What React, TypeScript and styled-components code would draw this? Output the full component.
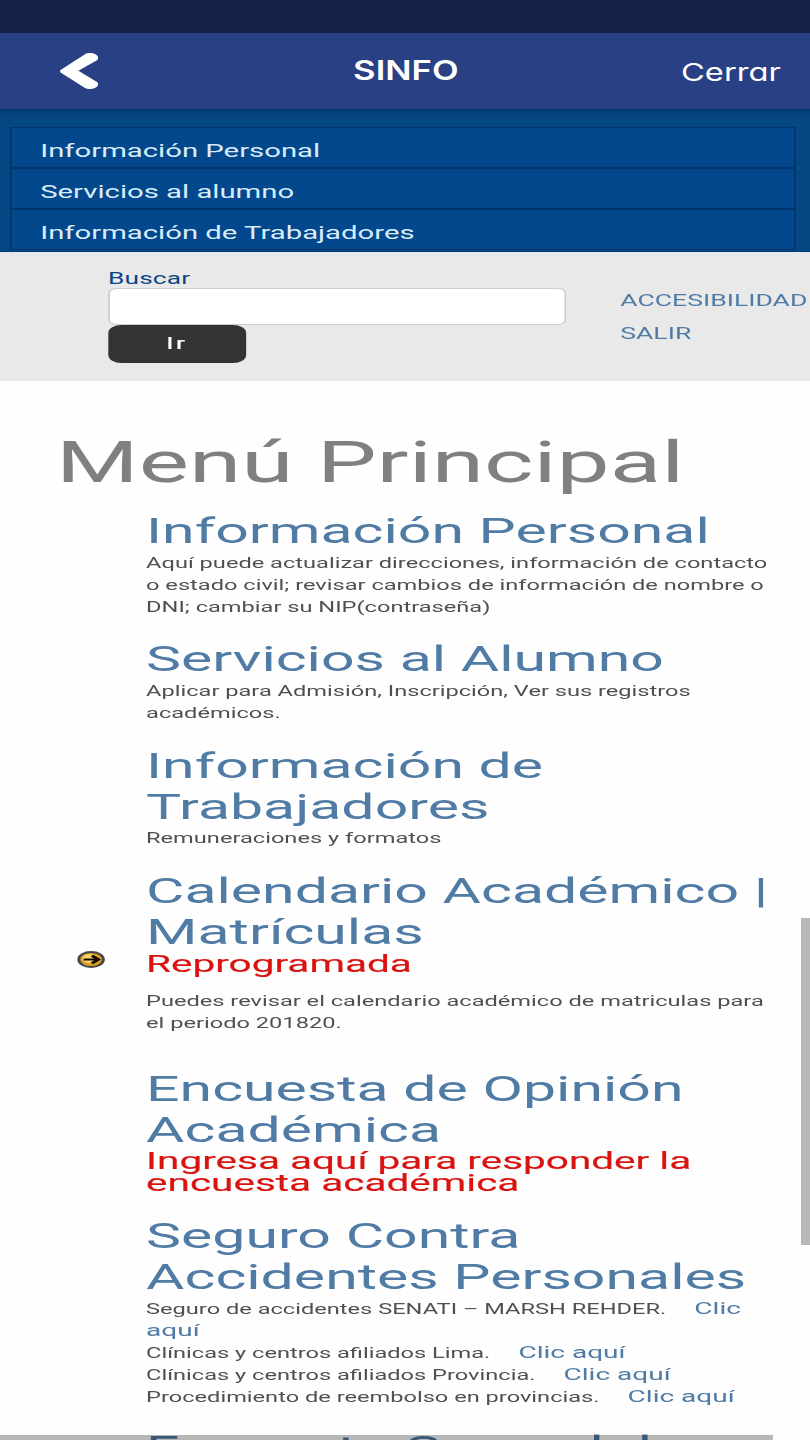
import React from "react";
import styled, { createGlobalStyle } from "styled-components";

const STRETCH = 1.641;

const GlobalStyle = createGlobalStyle`
  * { box-sizing: border-box; }
  html, body { margin: 0; padding: 0; background: #fff; overflow: hidden; }
  h1, h2, p, ul { margin: 0; padding: 0; font-weight: 400; list-style: none; }
  a { text-decoration: none; }
`;

const Screen = styled.main`
  position: relative;
  width: 810px;
  height: 1440px;
  overflow: hidden;
  background: #fefefe;
  font-family: Roboto, sans-serif;
`;

const StatusBar = styled.div`
  height: 33px;
  background: #152146;
`;

const AppBar = styled.header`
  display: grid;
  grid-template-columns: 1fr auto 1fr;
  align-items: center;
  height: 76px;
  padding: 0 29px 0 30px;
  background: #294084;
  color: #fff;
  font-family: Inter, sans-serif;
`;

const BackButton = styled.button`
  display: flex;
  width: 40px;
  margin-left: 29px;
  padding: 0;
  border: 0;
  background: none;
`;

const AppTitle = styled.div`
  padding-bottom: 2px;
  font-size: 27.5px;
  font-weight: 600;
  transform: scaleX(1.26);
`;

const CloseLink = styled.a`
  justify-self: end;
  padding-top: 1px;
  font-size: 24.5px;
  font-feature-settings: "cv11";
  transform: scaleX(1.335);
  transform-origin: right;
`;

const WebPage = styled.div`
  width: ${810 / STRETCH}px;
  transform: scaleX(${STRETCH});
  transform-origin: 0 0;
`;

const NavBand = styled.nav`
  height: 143px;
  padding: 18px 8.4px 0 5.5px;
  background: linear-gradient(#033a73 0, #05457f 6px, #054884 14px, #054884 100%);
  border-bottom: 1px solid #003c79;
`;

const NavItem = styled.a`
  display: block;
  height: 41px;
  padding: 5px 0 0 18px;
  border: 1px solid #00336a;
  background: #03488c;
  color: #d9ecfa;
  font-size: 17.85px;
  line-height: 35px;
`;

const SearchBand = styled.section`
  display: flex;
  height: 129px;
  padding: 15px 0 0 65.8px;
  border-top: 1px solid #dfe9f1;
  background: #e9e9e9;
`;

const SearchForm = styled.div`
  display: flex;
  flex-direction: column;
  align-items: flex-start;
  width: 279.6px;
`;

const SearchLabel = styled.label`
  height: 20px;
  color: #0c4585;
  font-size: 16px;
  line-height: 21px;
  letter-spacing: 0.1px;
`;

const SearchInput = styled.input`
  width: 100%;
  height: 37px;
  border: 1px solid #ccc;
  border-radius: 5px;
  background: #fff;
`;

const SearchButton = styled.button`
  width: 83.9px;
  height: 38px;
  padding: 0;
  border: 0;
  border-radius: 8px;
  background: #333;
  color: #fff;
  font: 400 16.2px/38px Roboto, sans-serif;
  letter-spacing: 1.5px;
  -webkit-text-stroke: 0.2px #fff;
`;

const UtilityLinks = styled.div`
  display: flex;
  flex-direction: column;
  padding: 16px 0 0 32.6px;
`;

const UtilityLink = styled.a`
  color: #4f7ba5;
  font-size: 16.2px;
  line-height: 33px;
`;

const PageTitle = styled.h1`
  padding: 48px 0 0 34.2px;
  color: #808080;
  font-size: 57.7px;
  line-height: 66px;
`;

const MenuList = styled.ul`
  display: flex;
  flex-direction: column;
  padding-top: 16px;
`;

const MenuItem = styled.li<{ $gap?: number }>`
  display: grid;
  grid-template-columns: 89px 383px;
  margin-bottom: ${(p) => p.$gap ?? 20}px;
`;

const Marker = styled.div`
  padding: 80px 0 0 46.6px;
  line-height: 0;
`;

const ItemBody = styled.div`
  grid-column: 2;
`;

const ItemTitle = styled.h2`
  color: #4f7ba5;
  font-size: 35.95px;
  line-height: 41px;
`;

const Alert = styled.p<{ $spaced?: boolean }>`
  margin: ${(p) => (p.$spaced ? "0 0 16px" : "-1px 0 0")};
  color: #d91410;
  font-size: 24.7px;
  line-height: 22px;
  -webkit-text-stroke: 0.15px #d91410;
`;

const Description = styled.p<{ $flush?: boolean }>`
  padding-top: ${(p) => (p.$flush ? 0 : 1)}px;
  color: #505050;
  font-size: 14.4px;
  line-height: 22px;
`;

const InlineLink = styled.a`
  margin-left: 13.5px;
  color: #4f7ba5;
  font-size: 17.1px;
  line-height: 0;
`;

const VerticalThumb = styled.div`
  position: absolute;
  top: 918px;
  right: 0;
  width: 9px;
  height: 327px;
  background: #b8b8b8;
`;

const HorizontalThumb = styled.div`
  position: absolute;
  left: 0;
  bottom: 0;
  width: 773px;
  height: 5px;
  background: rgba(0, 0, 0, 0.28);
`;

const navigation = ["Información Personal", "Servicios al alumno", "Información de Trabajadores"];

const insuranceLinks = [
  "Seguro de accidentes SENATI – MARSH REHDER.",
  "Clínicas y centros afiliados Lima.",
  "Clínicas y centros afiliados Provincia.",
  "Procedimiento de reembolso en provincias.",
];

const BackIcon = () => (
  <svg width="40" height="40" viewBox="0 0 40 40" aria-hidden="true">
    <path
      d="M1.6 19 26 3.2C31 .2 42 3.6 38.4 9L19.4 19.8 38.4 31.2C42 36.8 31 39.8 26 37L1.6 21.4Q.6 20.2 1.6 19Z"
      fill="#fff"
    />
  </svg>
);

const ArrowBadge = () => (
  <svg width="17" height="17" viewBox="0 0 17 17" aria-hidden="true">
    <circle cx="8.5" cy="8.5" r="7.5" fill="#dfa021" stroke="#45454c" strokeWidth="1.8" />
    <circle cx="7.6" cy="7.6" r="4.3" fill="#ffd76a" />
    <path d="M4 8.5H12.6M9 4.6l4 3.9-4 3.9" fill="none" stroke="#100a04" strokeWidth="2.2" />
  </svg>
);

export default function App() {
  return (
    <>
      <GlobalStyle />
      <Screen>
        <StatusBar />
        <AppBar>
          <BackButton aria-label="Volver">
            <BackIcon />
          </BackButton>
          <AppTitle>SINFO</AppTitle>
          <CloseLink>Cerrar</CloseLink>
        </AppBar>
        <WebPage>
          <NavBand>
            {navigation.map((label) => (
              <NavItem key={label}>{label}</NavItem>
            ))}
          </NavBand>
          <SearchBand>
            <SearchForm>
              <SearchLabel htmlFor="search">Buscar</SearchLabel>
              <SearchInput id="search" />
              <SearchButton>Ir</SearchButton>
            </SearchForm>
            <UtilityLinks>
              <UtilityLink>ACCESIBILIDAD</UtilityLink>
              <UtilityLink>SALIR</UtilityLink>
            </UtilityLinks>
          </SearchBand>
          <PageTitle>Menú Principal</PageTitle>
          <MenuList>
            <MenuItem>
              <ItemBody>
                <ItemTitle>Información Personal</ItemTitle>
                <Description>
                  Aquí puede actualizar direcciones, información de contacto o estado civil; revisar
                  cambios de información de nombre o DNI; cambiar su NIP(contraseña)
                </Description>
              </ItemBody>
            </MenuItem>
            <MenuItem $gap={21}>
              <ItemBody>
                <ItemTitle>Servicios al Alumno</ItemTitle>
                <Description>
                  Aplicar para Admisión, Inscripción, Ver sus registros académicos.
                </Description>
              </ItemBody>
            </MenuItem>
            <MenuItem $gap={21}>
              <ItemBody>
                <ItemTitle>Información de Trabajadores</ItemTitle>
                <Description $flush>Remuneraciones y formatos</Description>
              </ItemBody>
            </MenuItem>
            <MenuItem $gap={34}>
              <Marker>
                <ArrowBadge />
              </Marker>
              <ItemBody>
                <ItemTitle>Calendario Académico | Matrículas</ItemTitle>
                <Alert $spaced>Reprogramada</Alert>
                <Description $flush>
                  Puedes revisar el calendario académico de matriculas para el periodo 201820.
                </Description>
              </ItemBody>
            </MenuItem>
            <MenuItem $gap={22}>
              <ItemBody>
                <ItemTitle>Encuesta de Opinión Académica</ItemTitle>
                <Alert>Ingresa aquí para responder la encuesta académica</Alert>
              </ItemBody>
            </MenuItem>
            <MenuItem>
              <ItemBody>
                <ItemTitle>Seguro Contra Accidentes Personales</ItemTitle>
                {insuranceLinks.map((text, i) => (
                  <Description key={text} $flush={i > 0}>
                    {text} <InlineLink>Clic aquí</InlineLink>
                  </Description>
                ))}
              </ItemBody>
            </MenuItem>
            <MenuItem>
              <ItemBody>
                <ItemTitle>Encuesta General de</ItemTitle>
              </ItemBody>
            </MenuItem>
          </MenuList>
        </WebPage>
        <VerticalThumb />
        <HorizontalThumb />
      </Screen>
    </>
  );
}
